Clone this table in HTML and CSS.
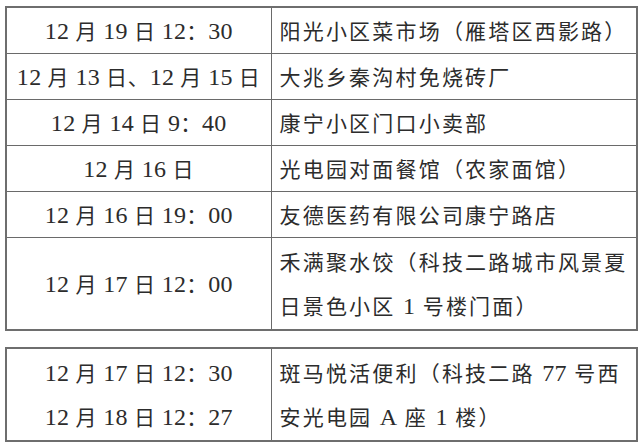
FILE: index.html
```html
<!DOCTYPE html>
<html lang="zh-CN">
<head>
<meta charset="utf-8">
<link rel="stylesheet" href="styles.css">
</head>
<body>
<div class="page">
  <table class="sheet">
    <colgroup><col class="c-time"><col class="c-place"></colgroup>
    <tr><td class="time"><span class="d">12</span> 月 <span class="d">19</span> 日 <span class="d">12</span>：<span class="d">30</span></td><td class="place">阳光小区菜市场（雁塔区西影路）</td></tr>
    <tr><td class="time"><span class="d">12</span> 月 <span class="d">13</span> 日、<span class="d">12</span> 月 <span class="d">15</span> 日</td><td class="place">大兆乡秦沟村免烧砖厂</td></tr>
    <tr><td class="time"><span class="d">12</span> 月 <span class="d">14</span> 日 <span class="d">9</span>：<span class="d">40</span></td><td class="place">康宁小区门口小卖部</td></tr>
    <tr><td class="time"><span class="d">12</span> 月 <span class="d">16</span> 日</td><td class="place">光电园对面餐馆（农家面馆）</td></tr>
    <tr><td class="time"><span class="d">12</span> 月 <span class="d">16</span> 日 <span class="d">19</span>：<span class="d">00</span></td><td class="place">友德医药有限公司康宁路店</td></tr>
    <tr class="tall"><td class="time"><span class="d">12</span> 月 <span class="d">17</span> 日 <span class="d">12</span>：<span class="d">00</span></td><td class="place">禾满聚水饺（科技二路城市风景夏<br>日景色小区 <span class="d">1</span> 号楼门面）</td></tr>
  </table>
  <table class="sheet">
    <colgroup><col class="c-time"><col class="c-place"></colgroup>
    <tr class="tall"><td class="time"><span class="d">12</span> 月 <span class="d">17</span> 日 <span class="d">12</span>：<span class="d">30</span><br><span class="d">12</span> 月 <span class="d">18</span> 日 <span class="d">12</span>：<span class="d">27</span></td><td class="place">斑马悦活便利（科技二路 <span class="d">77</span> 号西<br>安光电园 <span class="d">A</span> 座 <span class="d">1</span> 楼）</td></tr>
  </table>
</div>
</body>
</html>
```
FILE: styles.css
```css
html, body {
  margin: 0;
  background: #ffffff;
}
.page {
  display: flex;
  flex-direction: column;
  gap: 16px;
  padding: 6px 0 0 5px;
}
.sheet {
  border-collapse: collapse;
  table-layout: fixed;
  width: 631px;
  border: 2px solid #6e6e6e;
  font-family: "Liberation Serif", "Noto Sans CJK SC", serif;
  font-size: 21px;
  color: #2c2c2c;
  text-spacing-trim: space-all;
}
.c-time { width: 265px; }
.c-place { width: 366px; }
.sheet td {
  border: 1px solid #6a6a6a;
  height: 41px;
  padding: 4px 0 0 0;
  line-height: 41px;
  white-space: nowrap;
  vertical-align: middle;
}
.sheet tr.tall td {
  height: 89px;
  padding-top: 2px;
  line-height: 44px;
}
.d {
  font-size: 24px;
  line-height: 1;
  letter-spacing: 0.3px;
}
.time {
  text-align: center;
  letter-spacing: 0.8px;
}
.place {
  text-align: left;
  padding-left: 8px !important;
  letter-spacing: 2.2px;
}
```
